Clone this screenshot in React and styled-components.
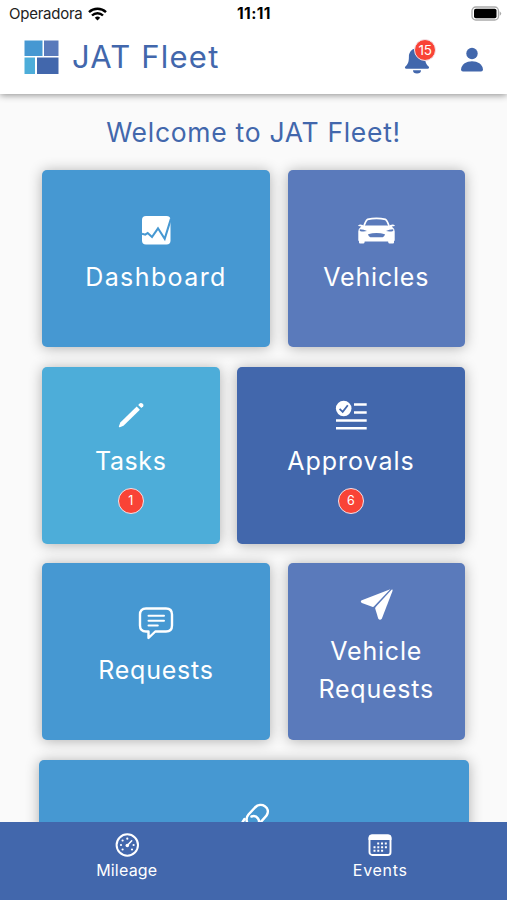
import React from 'react';
import styled, { createGlobalStyle } from 'styled-components';

const GlobalStyle = createGlobalStyle`
  * {
    box-sizing: border-box;
  }

  body {
    margin: 0;
    background-color: #fafafa;
    font-family: Inter, 'Open Sans', sans-serif;
  }
`;

const Screen = styled.div`
  display: flex;
  flex-direction: column;
  width: 100%;
  height: 900px;
  overflow: hidden;
`;

const Top = styled.div`
  position: relative;
  flex: none;
  height: 94px;
  background-color: white;
  box-shadow: 0 1px 7px rgba(0,0,0,.45);
`;

const StatusBar = styled.div`
  display: grid;
  grid-template-columns: 1fr auto 1fr;
  align-items: center;
  height: 27px;
  padding: 0 5px 0 9px;
  font-size: 15px;
  line-height: 27px;
  color: #222;
`;

const Carrier = styled.div`
  display: flex;
  align-items: center;
  gap: 6px;
  letter-spacing: -0.25px;
`;

const Clock = styled.div`
  margin-right: 3px;
  font-size: 15.5px;
  font-weight: 700;
  color: black;
  letter-spacing: 0.4px;
`;

const Battery = styled.svg`
  justify-self: end;
`;

const Header = styled.div`
  display: flex;
  align-items: center;
  height: 60px;
  padding: 0 23px 0 24px;
`;

const Brand = styled.div`
  flex: 1;
  margin-left: 13px;
  padding-bottom: 2px;
  font-size: 31px;
  letter-spacing: 1.2px;
  color: #4267ac;
`;

const HeaderButton = styled.div`
  position: relative;
  display: flex;
  padding-top: 6px;
  margin-left: 30px;
`;

const Count = styled.div`
  display: flex;
  align-items: center;
  justify-content: center;
  width: 26px;
  height: 26px;
  border: 1.5px solid #f3e3e8;
  border-radius: 50%;
  background-color: #f94336;
  color: white;
  font-size: 12.5px;
`;

const BellCount = styled(Count)`
  position: absolute;
  top: -1px;
  left: 10px;
  width: 22px;
  height: 22px;
  border-width: 1px;
  font-size: 13.5px;
  letter-spacing: -0.3px;
`;

const Content = styled.div`
  flex: 1;
  min-height: 0;
  overflow: hidden;
`;

const Title = styled.div`
  padding-top: 19px;
  height: 76px;
  font-size: 26.5px;
  line-height: 38px;
  letter-spacing: 0.7px;
  text-align: center;
  color: #4267ac;
`;

const Row = styled.div`
  display: flex;
  gap: 17.5px;
  padding: 0 ${props => props.$side || 42}px;
  margin-bottom: 19.5px;
`;

const Tile = styled.div`
  display: flex;
  flex-direction: column;
  align-items: center;
  flex: ${props => (props.$wide ? '1' : '0 0 177.5px')};
  height: 177px;
  padding-top: ${props => props.$top}px;
  border-radius: 5px;
  background-color: ${props => props.$color};
  box-shadow: 0 1px 14px rgba(0,0,0,.3);
  color: white;
`;

const Label = styled.div`
  margin: ${props => props.$gap || 7}px 0 8px;
  font-size: 25px;
  line-height: 38px;
  letter-spacing: ${props => props.$spacing || 0.8}px;
  text-align: center;
`;

const BottomBar = styled.div`
  position: relative;
  display: flex;
  flex: none;
  height: 78px;
  background-color: #4267ac;
`;

const Tab = styled.div`
  display: flex;
  flex: 1;
  flex-direction: column;
  align-items: center;
  padding-top: 10px;
  font-size: 16px;
  line-height: 25px;
  letter-spacing: ${props => props.$spacing}px;
  color: white;
`;

const Logo = () => (
  <svg width="35" height="35" viewBox="0 0 35 35">
    <path fill="#4698d2" d="M0.5 0.5h18v15.5h-18z" />
    <path fill="#5a7abb" d="M20 0.5h14.5v15.5h-14.5z" />
    <path fill="#4dadd9" d="M0.5 17.5h10.5v16.5h-10.5z" />
    <path fill="#4267ac" d="M13 17.5h21.5v16.5h-21.5z" />
  </svg>
);

const WifiIcon = () => (
  <svg width="19" height="14" viewBox="0 0 19 14" fill="none" stroke="#000" strokeWidth="2.4">
    <path d="M1 5.2a12.3 12.3 0 0 1 17 0" />
    <path d="M4 8.5a7.8 7.8 0 0 1 11 0" />
    <path d="M6.8 10.8a4 4 0 0 1 5.4 0L9.5 13.6z" fill="#000" stroke="none" />
  </svg>
);

const BatteryIcon = () => (
  <Battery width="31" height="15" viewBox="0 0 31 15">
    <rect x="1" y="1" width="26.5" height="13" rx="3.8" fill="#fff" stroke="#aaa" strokeWidth="1.3" />
    <rect x="3" y="2.8" width="22.5" height="9.4" rx="1.8" />
    <path d="M28.7 5.2q3 2.3 0 4.6z" fill="#aaa" />
  </Battery>
);

const BellIcon = () => (
  <svg width="26" height="28" viewBox="0 0 26 28" fill="#4267ac">
    <path d="M13 0.8c1 0 1.8.7 1.9 1.7 4 .9 6.2 4.3 6.2 8.3 0 6 1.3 7.6 3.5 9.7 1 1 .4 2.3-.9 2.3H2.3C1 22.8.4 21.5 1.4 20.5c2.2-2.1 3.5-3.7 3.5-9.7 0-4 2.2-7.4 6.2-8.3.1-1 .9-1.7 1.9-1.7z" />
    <path d="M9 24.2h8a4 3.2 0 0 1-8 0z" />
  </svg>
);

const PersonIcon = () => (
  <svg width="24" height="26" viewBox="0 0 24 26" fill="#4267ac">
    <circle cx="12" cy="6.5" r="5.7" />
    <path d="M1 22.5C1.5 17 6.5 14.2 12 14.2S22.5 17 23 22.5q0 2-2 2H3q-2 0-2-2z" />
  </svg>
);

const DashboardIcon = () => (
  <svg width="40" height="40" viewBox="0 0 40 40" fill="none">
    <rect x="6" y="5" width="28.5" height="28.6" rx="4" fill="#fff" />
    <path d="M6 22.7L9.3 23.7L11.7 22L16 26L22 17.3L28.7 27.7L35 7.5" stroke="#4698d2" strokeWidth="2.1" />
  </svg>
);

const CarIcon = () => (
  <svg width="40" height="40" viewBox="0 0 40 40" fill="#fff">
    <path d="M7.8 15.2Q9.5 10 11.5 8.4Q20.5 6.4 29.5 8.4Q31.5 10 33.2 15.2" fill="none" stroke="#fff" strokeWidth="1.6" />
    <path d="M2.3 14.3q1.5-1.3 4.5-.2l.3.6 2.5-.2h21.8l2.5.2.3-.6q3-1.1 4.5.2v.8l-3 .4q2.7 1.800 3 5v8.600q0 1-.7 1.200v1.200q0 1-1 1h-3.500q-1 0-1.200-1l-.2-1H8.700l-.2 1q-.2 1-1.200 1H4q-1 0-1-1v-1.200q-.7-.2-.7-1.200v-8.600q.3-3.200 3-5l-3-.4z" />
    <path d="M3.8 18.200q4.200 0 7.200 1.900-4 1-7.200-.2zM37.200 18.200q-4.200 0-7.200 1.900 4 1 7.200-.2zM12 23.300q8.500-2.400 17 0-.5 2.600-2.300 2.900H14.300q-1.800-.3-2.300-2.900z" fill="#5a7abb" />
  </svg>
);

const PencilIcon = () => (
  <svg width="40" height="40" viewBox="0 0 40 40" fill="#fff">
    <path d="M25.7 11.5L28.9 14.7L12.5 30.8L8.8 32.2Q7.6 32.4 7.9 31.2L9.3 27.500z" />
    <path d="M27.200 10L28.900 8.300Q30.200 7.300 31.700 8.700T32.200 11.300L30.400 13.100z" />
  </svg>
);

const ApprovalsIcon = () => (
  <svg width="40" height="40" viewBox="0 0 40 40" fill="none">
    <circle cx="12.7" cy="13.5" r="7.8" fill="#fff" />
    <path d="M8.6 13.8L11.7 16.8L16.8 10.3" stroke="#4267ac" strokeWidth="1.8" />
    <path d="M23 9.5h12.7M23 17.5h12.7M5 25.500h30.700M5 33.200h30.700" stroke="#fff" strokeWidth="2.6" />
  </svg>
);

const MessageIcon = () => (
  <svg width="40" height="40" viewBox="0 0 40 40" fill="none" stroke="#fff" strokeWidth="2.4" strokeLinecap="round" strokeLinejoin="round">
    <path d="M10 6.5h20q6 0 6 6v11q0 6-6 6H19.3L12.5 36V29.5H10q-6 0-6-6v-11q0-6 6-6z" />
    <path d="M12.5 13.8h15.5M12.5 18.7h15.5M12.5 23.6h9.3" strokeWidth="2" />
  </svg>
);

const SendIcon = () => (
  <svg width="40" height="40" viewBox="0 0 40 40" fill="#fff">
    <path d="M34.300 5.200L5.800 16.200Q3.800 17.400 5.900 18.900L16.800 22.900Q17.500 23 18.100 22.300z" />
    <path d="M35.500 5.700Q37 5 36.500 7L25.800 34.700Q24 37 22.300 34.700L19.200 24.500Q19.200 23.800 19.700 23z" />
  </svg>
);

const LinkIcon = () => (
  <svg width="40" height="40" viewBox="0 0 40 40" fill="none" stroke="#fff" strokeWidth="2.5" strokeLinecap="round">
    <path d="M14.500 27q-4-6 0-10.500l6.500-7c6-6 16.500 0 11.500 8l-7 8" />
    <path d="M17.500 18.500q4-1.500 6.500 2t-.5 8.500l-7 6.500c-6 6-15-2-10-8l4-6.500" />
  </svg>
);

const GaugeIcon = () => (
  <svg width="26" height="26" viewBox="0 0 26 26" fill="#fff">
    <circle cx="13.3" cy="13" r="10.7" fill="none" stroke="#fff" strokeWidth="2" />
    <circle cx="13.3" cy="6.7" r="1.1" />
    <circle cx="8.6" cy="8.5" r="1.1" />
    <circle cx="7" cy="13" r="1.1" />
    <circle cx="19.6" cy="13" r="1.1" />
    <circle cx="8.6" cy="17.5" r="1.1" />
    <circle cx="18" cy="17.5" r="1.1" />
    <circle cx="13.3" cy="13.5" r="1.8" />
    <path d="M13.3 13.5L17.7 8.7" stroke="#fff" strokeWidth="1.5" strokeLinecap="round" />
  </svg>
);

const CalendarIcon = () => (
  <svg width="26" height="26" viewBox="0 0 26 26" fill="none" stroke="#fff">
    <rect x="2.5" y="3.5" width="21" height="19.5" rx="2.8" strokeWidth="1.9" />
    <path d="M2.5 7V6q0-2.5 2.5-2.5h16q2.5 0 2.5 2.5v1z" fill="#fff" strokeWidth="1.9" />
    <path d="M10.2 11.5h9.8M6.5 15.2h13.5M6.5 18.8h10" strokeWidth="2" strokeDasharray="2 1.8" />
  </svg>
);

const App = () => (
  <Screen>
    <GlobalStyle />
    <Top>
      <StatusBar>
        <Carrier>Operadora <WifiIcon /></Carrier>
        <Clock>11:11</Clock>
        <BatteryIcon />
      </StatusBar>
      <Header>
        <Logo />
        <Brand>JAT Fleet</Brand>
        <HeaderButton>
          <BellIcon />
          <BellCount>15</BellCount>
        </HeaderButton>
        <HeaderButton>
          <PersonIcon />
        </HeaderButton>
      </Header>
    </Top>
    <Content>
      <Title>Welcome to JAT Fleet!</Title>
      <Row>
        <Tile $wide $top={41} $color="#4698d2">
          <DashboardIcon />
          <Label $spacing={1.4}>Dashboard</Label>
        </Tile>
        <Tile $top={41} $color="#5a7abb">
          <CarIcon />
          <Label>Vehicles</Label>
        </Tile>
      </Row>
      <Row>
        <Tile $top={28} $color="#4dadd9">
          <PencilIcon />
          <Label $spacing={0.6}>Tasks</Label>
          <Count>1</Count>
        </Tile>
        <Tile $wide $top={28} $color="#4267ac">
          <ApprovalsIcon />
          <Label $spacing={1}>Approvals</Label>
          <Count>6</Count>
        </Tile>
      </Row>
      <Row>
        <Tile $wide $top={39} $color="#4698d2">
          <MessageIcon />
          <Label $gap={9}>Requests</Label>
        </Tile>
        <Tile $top={21} $color="#5a7abb">
          <SendIcon />
          <Label $gap={8}>Vehicle<br />Requests</Label>
        </Tile>
      </Row>
      <Row $side={38.5}>
        <Tile $wide $top={38} $color="#4698d2">
          <LinkIcon />
        </Tile>
      </Row>
    </Content>
    <BottomBar>
      <Tab $spacing={0.2}>
        <GaugeIcon />
        Mileage
      </Tab>
      <Tab $spacing={0.7}>
        <CalendarIcon />
        Events
      </Tab>
    </BottomBar>
  </Screen>
);

export default App;
